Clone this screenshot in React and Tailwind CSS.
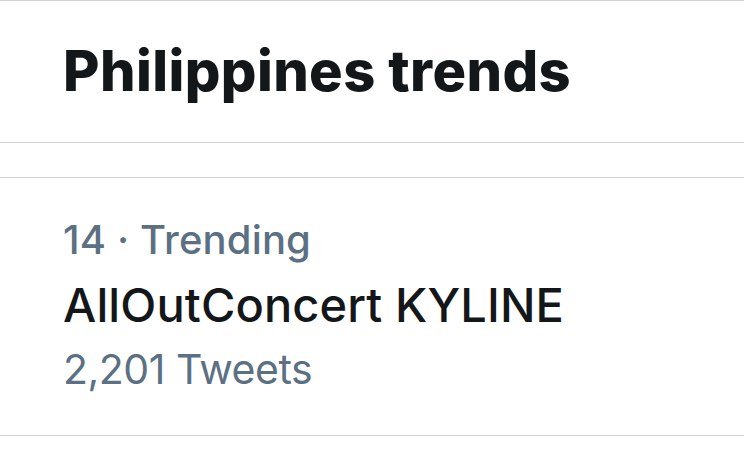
export default function App() {
  return (
    <div className="w-[744px] h-[473px] bg-white overflow-hidden" style={{ fontFamily: 'Inter, "Liberation Sans", Arial, sans-serif' }}>
      <div className="h-[1px] bg-[#cfd3d6]" />
      <div className="h-[141px] pl-[63px] pt-[42px]">
        <h1 className="text-[56px] leading-[56px] font-extrabold text-[#14171a] tracking-[0.4px]">Philippines trends</h1>
      </div>
      <div className="h-[1px] bg-[#cfd3d6]" />
      <div className="h-[34px]" />
      <div className="h-[1px] bg-[#cfd3d6]" />
      <div className="h-[257px] pl-[63px] pt-[42px] flex flex-col">
        <div className="text-[40px] leading-[40px] text-[#5b7083] font-medium tracking-[0.15px]">14 · Trending</div>
        <div className="mt-[21px] text-[47px] leading-[47px] text-[#14171a] font-medium tracking-[0.1px]">AllOutConcert KYLINE</div>
        <div className="mt-[21px] text-[41px] leading-[41px] text-[#5b7083] font-normal tracking-[-0.5px]">2,201 Tweets</div>
      </div>
      <div className="h-[1px] bg-[#cfd3d6]" />
    </div>
  );
}
